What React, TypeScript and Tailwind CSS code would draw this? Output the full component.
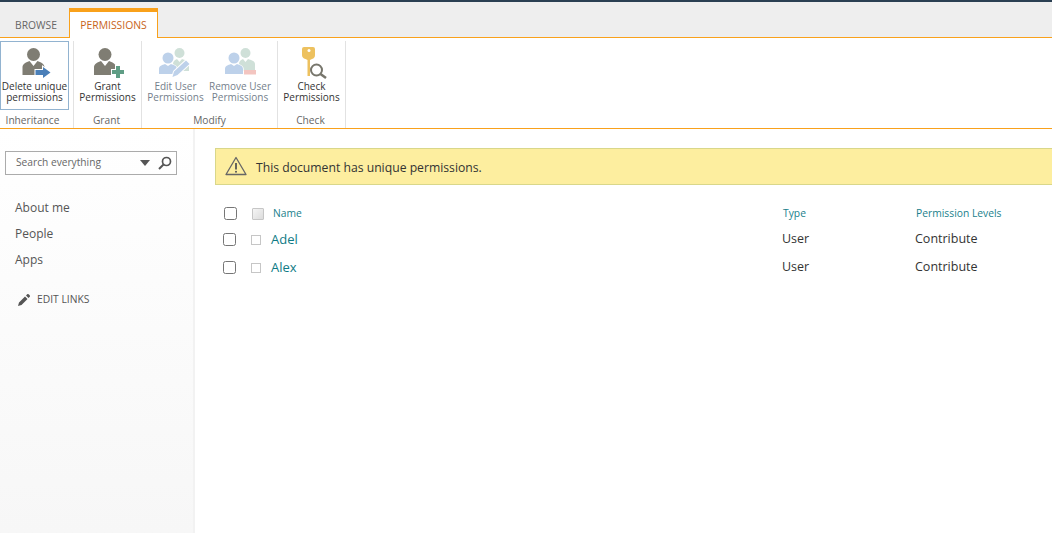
import React from 'react'

const FONT = "font-['Open_Sans','Noto_Sans',sans-serif]"

function Person({ x = 0, y = 0, fill = '#7f7d73' }: { x?: number; y?: number; fill?: string }) {
  return (
    <g transform={`translate(${x} ${y})`}>
      <circle cx="11" cy="7.500" r="6.500" fill={fill} />
      <path d="M0 28v-8c0-3 4-5 7-6l4 5 4-5c3 1 7 3 7 6v8z" fill={fill} />
    </g>
  )
}

function DeleteIcon() {
  return (
    <svg width="32" height="32" viewBox="0 0 32 32">
      <Person x={3.500} />
      <path d="M16.500 23H24v-3l7.500 5.500-7.500 5.500v-3h-7.500z" fill="#4a7fb8" stroke="#fff" strokeWidth="2" paintOrder="stroke" />
    </svg>
  )
}

function GrantIcon() {
  return (
    <svg width="32" height="32" viewBox="0 0 32 32">
      <Person x={2} />
      <path d="M24 19h4v4h4v4h-4v4h-4v-4h-4v-4h4z" fill="#5f9d85" stroke="#fff" strokeWidth="2" paintOrder="stroke" />
    </svg>
  )
}

function PairIcon({ edit }: { edit?: boolean }) {
  return (
    <svg width="33" height="32" viewBox="0 0 33 32">
      <g transform={edit ? undefined : 'translate(1 0)'}>
        <circle cx="20.500" cy="6" r="5" fill="#cfe0d8" />
        <path d="M14 24v-7c0-3 2-4 4-5l2.500 3 2.500-3c3 1 7 2 7 5v7z" fill="#cfe0d8" />
        <circle cx="9" cy="11" r="5.500" fill="#bdd1ea" stroke="#fff" strokeWidth="2" paintOrder="stroke" />
        <path d="M0 27v-5c0-3 3-4 6-5l3 2 3-2c3 1 6 2 6 5v5z" fill="#bdd1ea" stroke="#fff" strokeWidth="1.500" paintOrder="stroke" />
      </g>
      {edit
        ? <path d="M13.500 30l1.500-5.500 12-11 3.500 3.500-12 11z" fill="#bdd1ea" stroke="#fff" strokeWidth="2" paintOrder="stroke" />
        : <rect x="20" y="23" width="12" height="4.500" fill="#f3c5c0" />}
    </svg>
  )
}

function KeyIcon() {
  return (
    <svg width="33" height="32" viewBox="0 0 33 32">
      <path d="M9 0h9q2 0 2 2v6q0 3-3 4l-2 1v16h-2.500V13l-2-1q-3.500-1-3.500-4V2q0-2 2-2z" fill="#edc15f" />
      <circle cx="14" cy="3.500" r="1.500" fill="#fff" />
      <circle cx="21.500" cy="23" r="5.500" fill="#fff" stroke="#77766c" strokeWidth="2" />
      <path d="M25.500 27l5.500 4" stroke="#77766c" strokeWidth="2.500" />
    </svg>
  )
}

function RibbonButton({ icon, lines, selected, className }: {
  icon: React.ReactNode; lines: string[]; selected?: boolean; className: string
}) {
  return (
    <div className={`flex flex-col items-center h-[69px] pt-[5px] ${selected ? 'border border-[#92b3d0]' : 'border border-transparent'} ${className}`}>
      <div className="h-[32px]">{icon}</div>
      <div className={`mt-[2px] text-[10px] leading-[11px] text-center whitespace-nowrap ${selected ? 'text-[#333]' : ''}`}>
        {lines.map(l => <div key={l}>{l}</div>)}
      </div>
    </div>
  )
}

function Group({ label, width, labelClass = '', children, muted }: {
  label: string; width: string; labelClass?: string; children: React.ReactNode; muted?: boolean
}) {
  return (
    <div className={`flex flex-col h-[87px] mt-[3px] border-r border-[#e2e2e2] ${width}`}>
      <div className={`flex h-[69px] ${muted ? 'text-[#74808c]' : 'text-[#333]'}`}>{children}</div>
      <div className={`mt-[3px] text-[10.200px] leading-[15px] text-center text-[#666] ${labelClass}`}>{label}</div>
    </div>
  )
}

function Row({ name }: { name: string }) {
  return (
    <div className="flex items-center h-[28px]">
      <input type="checkbox" readOnly className="ml-[8px] mb-[1px] w-[13px] h-[13px] appearance-none rounded-[2.500px] border border-[#767676] bg-white" />
      <span className="ml-[15px] mb-[1px] w-[10px] h-[10px] border border-[#c6c6c6]" />
      <span className="ml-[10px] w-[511px] text-[13px] text-[#0f7b85]">{name}</span>
      <span className="w-[133px] pb-[2px] text-[12.500px] text-[#333]">User</span>
      <span className="pb-[2px] text-[12.500px] text-[#333]">Contribute</span>
    </div>
  )
}

export default function App() {
  return (
    <div className={`w-[1052px] h-[533px] overflow-hidden bg-white flex flex-col ${FONT}`}>
      <div className="h-[2px] bg-[#2a3f52]" />
      <div className="h-[36px] bg-[#eeeeee] border-b border-[#f9a11b] flex items-end">
        <div className="w-[69px] pb-[5px] pl-[15px] text-[10.300px] leading-[14px] text-[#666]">BROWSE</div>
        <div className="w-[89px] h-[30px] -mb-px bg-white border-x border-[#f9a11b] border-t-4 border-t-[#f9a11b] pt-[6px] text-center text-[10.400px] leading-[14px] text-[#c8641a]">
          PERMISSIONS
        </div>
      </div>

      <div className="h-[91px] border-b border-[#f9a11b] flex items-start">
        <Group label="Inheritance" width="w-[74px]" labelClass="pr-[8px]">
          <RibbonButton selected className="w-[69px]" lines={['Delete unique', 'permissions']} icon={<DeleteIcon />} />
        </Group>
        <Group label="Grant" width="w-[68px]" labelClass="pr-[2px]">
          <RibbonButton className="w-full" lines={['Grant', 'Permissions']} icon={<GrantIcon />} />
        </Group>
        <Group label="Modify" width="w-[136px]" muted>
          <RibbonButton className="w-[67px]" lines={['Edit User', 'Permissions']} icon={<PairIcon edit />} />
          <RibbonButton className="w-[62px]" lines={['Remove User', 'Permissions']} icon={<PairIcon />} />
        </Group>
        <Group label="Check" width="w-[68px]" labelClass="pr-[2px]">
          <RibbonButton className="w-full" lines={['Check', 'Permissions']} icon={<KeyIcon />} />
        </Group>
      </div>

      <div className="flex flex-1 min-h-0">
        <aside className="w-[195px] shrink-0 border-r-2 border-[#f2f2f2] bg-gradient-to-b from-white to-[#f7f7f7] pt-[22px] pl-[5px]">
          <div className="w-[172px] h-[24px] border border-[#ababab] flex items-center text-[10.200px] text-[#666] pl-[10px]">
            <span className="flex-1">Search everything</span>
            <svg width="10" height="6" viewBox="0 0 10 6" className="mr-[8px]"><path d="M0 0h10L5 6z" fill="#555" /></svg>
            <svg width="14" height="14" viewBox="0 0 14 14" className="mr-[4px]">
              <circle cx="8.500" cy="5.500" r="4" fill="none" stroke="#555" strokeWidth="1.700" />
              <path d="M5.500 8.500L1 13" stroke="#555" strokeWidth="2" />
            </svg>
          </div>
          <nav className="mt-[20px] pl-[10px] text-[12px] text-[#555] flex flex-col">
            <a className="h-[26px] leading-[26px]">About me</a>
            <a className="h-[26px] leading-[26px]">People</a>
            <a className="h-[26px] leading-[26px]">Apps</a>
          </nav>
          <div className="mt-[19px] pl-[12px] flex items-center text-[10.300px] text-[#555]">
            <svg width="14" height="14" viewBox="0 0 14 14"><path d="M1 13l1-3.500 6-6 2.500 2.500-6 6zM9 2.500l1.500-1.500c1-.5 3 1.500 2.500 2.500l-1.500 1.500z" fill="#555" /></svg>
            <span className="ml-[6px]">EDIT LINKS</span>
          </div>
        </aside>

        <main className="flex-1 min-w-0 pl-[20px] pt-[19px]">
          <div className="h-[37px] border border-r-0 border-[#d9d78a] bg-[#fdee9f] flex items-center text-[12.200px] text-[#333]">
            <svg width="22" height="20" viewBox="0 0 22 20" className="ml-[9px] mb-[1px]">
              <path d="M11 1.500L1 18.500h20z" fill="none" stroke="#666" strokeWidth="1.300" strokeLinejoin="round" />
              <path d="M11 7v6.500" stroke="#555" strokeWidth="1.800" />
              <circle cx="11" cy="15.800" r="1" fill="#555" />
            </svg>
            <span className="ml-[9px] pt-[3px]">This document has unique permissions.</span>
          </div>
          <div className="flex items-center h-[25px] mt-[16px]">
            <input type="checkbox" readOnly className="ml-[9px] w-[13px] h-[13px] appearance-none rounded-[2.500px] border border-[#767676] bg-white" />
            <span className="ml-[15px] w-[12px] h-[12px] border border-[#c6c6c6] rounded-[1px] bg-gradient-to-br from-[#f5f5f5] to-[#dcdcdc]" />
            <span className="ml-[9px] w-[510px] text-[10.300px] text-[#1a7f8c]">Name</span>
            <span className="w-[133px] text-[10.300px] text-[#1a7f8c]">Type</span>
            <span className="text-[10.300px] text-[#1a7f8c]">Permission Levels</span>
          </div>
          <Row name="Adel" />
          <Row name="Alex" />
        </main>
      </div>
    </div>
  )
}
